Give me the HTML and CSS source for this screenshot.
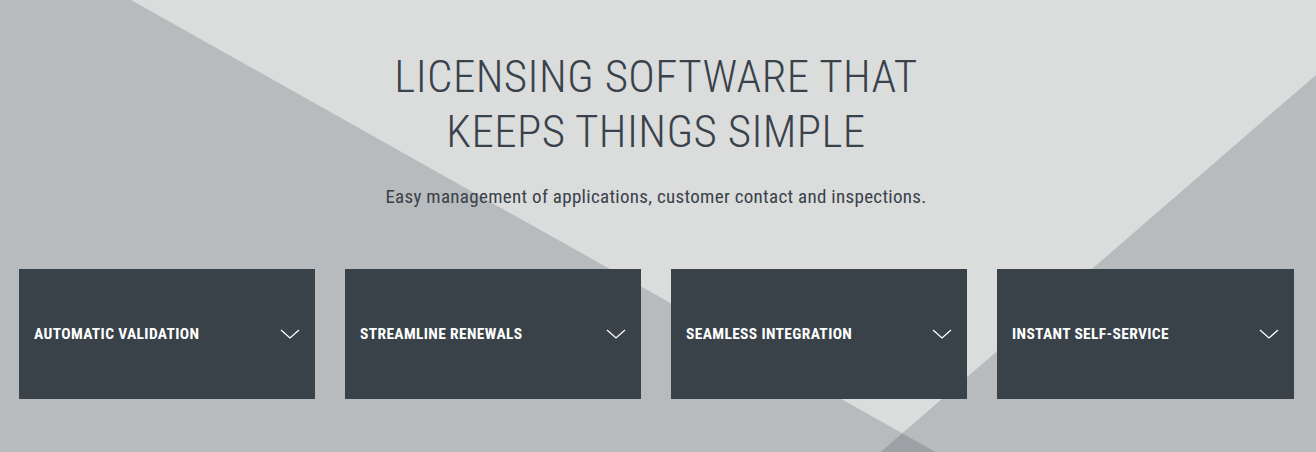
FILE: index.html
```html
<!DOCTYPE html>
<html lang="en">
<head>
<meta charset="utf-8">
<title>Licensing software</title>
<link rel="stylesheet" href="styles.css">
</head>
<body>
<section class="hero">
  <svg class="backdrop" viewBox="0 0 1316 452" preserveAspectRatio="none" aria-hidden="true">
    <polygon points="0,0 131,0 935.6,452 0,452" class="shade"/>
    <polygon points="1316,75 880.6,452 1316,452" class="shade"/>
  </svg>
  <div class="content">
    <h1 class="title">LICENSING SOFTWARE THAT<br>KEEPS THINGS SIMPLE</h1>
    <p class="subtitle">Easy management of applications, customer contact and inspections.</p>
    <div class="cards">
      <div class="card"><span class="card-label">AUTOMATIC VALIDATION</span><svg class="chev" viewBox="0 0 20 10"><polyline points="1,1 10,9 19,1"/></svg></div>
      <div class="card"><span class="card-label">STREAMLINE RENEWALS</span><svg class="chev" viewBox="0 0 20 10"><polyline points="1,1 10,9 19,1"/></svg></div>
      <div class="card"><span class="card-label">SEAMLESS INTEGRATION</span><svg class="chev" viewBox="0 0 20 10"><polyline points="1,1 10,9 19,1"/></svg></div>
      <div class="card"><span class="card-label">INSTANT SELF-SERVICE</span><svg class="chev" viewBox="0 0 20 10"><polyline points="1,1 10,9 19,1"/></svg></div>
    </div>
  </div>
</section>
</body>
</html>
```
FILE: styles.css
```css
* { box-sizing: border-box; }
html, body { margin: 0; padding: 0; }
body {
  background: #dbdcdc;
  font-family: "Roboto Condensed", Roboto, "DejaVu Sans Condensed", sans-serif;
  color: #39424a;
}
.hero {
  position: relative;
  width: 1316px;
  height: 452px;
  overflow: hidden;
}
.backdrop {
  position: absolute;
  left: 0;
  top: 0;
  width: 1316px;
  height: 452px;
}
.shade { fill: rgba(56, 66, 74, 0.21); }
.content {
  position: relative;
  display: flex;
  flex-direction: column;
  align-items: center;
  padding: 49px 4px 0 0;
}
.title {
  margin: 0;
  font-size: 45px;
  font-weight: 300;
  line-height: 55px;
  letter-spacing: 0.4px;
  text-align: center;
  color: #39424a;
}
.subtitle {
  margin: 26px 0 0;
  font-size: 19px;
  font-weight: 400;
  line-height: 24px;
  letter-spacing: 0.3px;
  color: #39424a;
}
.cards {
  align-self: stretch;
  display: grid;
  grid-template-columns: 296px 296px 296px 297px;
  column-gap: 30px;
  padding-left: 19px;
  margin-top: 60px;
}
.card {
  height: 130px;
  background: #394249;
  display: flex;
  align-items: center;
  justify-content: space-between;
  padding: 0 15px;
}
.card-label {
  font-size: 15.5px;
  font-weight: 700;
  letter-spacing: 0.35px;
  color: #ffffff;
  line-height: 20px;
}
.chev {
  width: 20px;
  height: 10px;
  fill: none;
  stroke: #ffffff;
  stroke-width: 1.3;
}
```
